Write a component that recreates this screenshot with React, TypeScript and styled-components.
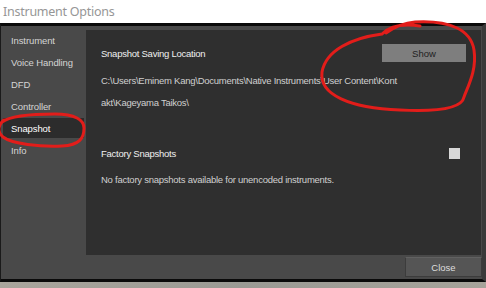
import styled, { createGlobalStyle } from "styled-components";

const GlobalStyle = createGlobalStyle`
  html, body {
    margin: 0;
    padding: 0;
    background: #ffffff;
  }
  * {
    box-sizing: border-box;
  }
`;

const Screen = styled.div`
  position: relative;
  width: 486px;
  height: 288px;
  overflow: hidden;
  display: flex;
  flex-direction: column;
  background: #ffffff;
  font-family: "Liberation Sans", Arial, sans-serif;
`;

const TitleBar = styled.div`
  height: 23px;
  flex-shrink: 0;
  display: flex;
  align-items: center;
  padding: 0 0 1px 3px;
  font-family: "Noto Sans", "Liberation Sans", sans-serif;
  font-size: 12.5px;
  letter-spacing: -0.25px;
  color: #969696;
`;

const Window = styled.div`
  height: 259px;
  flex-shrink: 0;
  display: flex;
  flex-direction: column;
  background: #494949;
  border-top: 3px solid #0a0a0a;
  border-bottom: 3px solid #0a0a0a;
  border-left: 1px solid #1a1a1a;
  border-right: 4px solid #3a3a3a;
`;

const Body = styled.div`
  flex: 1;
  display: flex;
  padding: 4px 1px 0 0;
`;

const Sidebar = styled.ul`
  width: 85px;
  margin: 0;
  padding: 0 0 0 2px;
  list-style: none;
  display: flex;
  flex-direction: column;
  gap: 2px;
`;

const NavItem = styled.li<{ $active?: boolean }>`
  height: 20px;
  display: flex;
  align-items: center;
  padding-left: 8px;
  margin-right: 2px;
  font-size: 9.5px;
  letter-spacing: -0.1px;
  color: ${(p) => (p.$active ? "#ffffff" : "#d4d4d4")};
  background: ${(p) => (p.$active ? "#2c2c2c" : "transparent")};
`;

const Panel = styled.section`
  flex: 1;
  background: #2f2f2f;
  padding: 14px 14px 0 15px;
  display: flex;
  flex-direction: column;
  color: #d6d6d6;
  font-size: 9.5px;
  letter-spacing: -0.25px;
`;

const Row = styled.div`
  display: flex;
  align-items: center;
  justify-content: space-between;
`;

const Heading = styled.div`
  color: #f0f0f0;
`;

const ShowButton = styled.button`
  width: 84px;
  height: 18px;
  margin-right: 1px;
  border: none;
  background: #7e7e7e;
  color: #1e1e1e;
  font-family: inherit;
  font-size: 9.5px;
  padding: 0;
`;

const Paths = styled.div`
  margin-top: 8px;
`;

const PathLine = styled.div`
  height: 22px;
  line-height: 22px;
  color: #cfcfcf;
`;

const Section = styled.div`
  margin-top: 34px;
`;

const CheckBox = styled.span`
  width: 11px;
  height: 11px;
  margin-right: 7px;
  background: #d8d8d8;
`;

const Note = styled.div`
  margin-top: 15px;
  color: #cfcfcf;
`;

const Footer = styled.div`
  height: 24px;
  flex-shrink: 0;
  display: flex;
  justify-content: flex-end;
  align-items: center;
`;

const CloseButton = styled.button`
  width: 77px;
  height: 20px;
  background: #555555;
  border: 1px solid #3c3c3c;
  border-top-color: #616161;
  color: #dedede;
  font-family: inherit;
  font-size: 9.5px;
  padding: 0;
`;

const Desk = styled.div`
  flex: 1;
  background: linear-gradient(90deg, #a9a59c 0%, #9a9a94 50%, #a6a39a 100%);
`;

const Marks = styled.svg`
  position: absolute;
  left: 0;
  top: 0;
  pointer-events: none;
`;

const navItems = ["Instrument", "Voice Handling", "DFD", "Controller", "Snapshot", "Info"];

const App = () => {
  return (
    <>
      <GlobalStyle />
      <Screen>
        <TitleBar>Instrument Options</TitleBar>
        <Window>
          <Body>
            <Sidebar>
              {navItems.map((item) => (
                <NavItem key={item} $active={item === "Snapshot"}>
                  {item}
                </NavItem>
              ))}
            </Sidebar>
            <Panel>
              <Row>
                <Heading>Snapshot Saving Location</Heading>
                <ShowButton>Show</ShowButton>
              </Row>
              <Paths>
                <PathLine>C:\Users\Eminem Kang\Documents\Native Instruments\User Content\Kont</PathLine>
                <PathLine>akt\Kageyama Taikos\</PathLine>
              </Paths>
              <Section>
                <Row>
                  <Heading>Factory Snapshots</Heading>
                  <CheckBox />
                </Row>
                <Note>No factory snapshots available for unencoded instruments.</Note>
              </Section>
            </Panel>
          </Body>
          <Footer>
            <CloseButton>Close</CloseButton>
          </Footer>
        </Window>
        <Desk />
        <Marks width="486" height="288" viewBox="0 0 486 288">
          <g fill="none" stroke="#e21d1a" strokeWidth="3" strokeLinecap="round">
            <path d="M 2 122 C 10 116, 30 114, 55 114 C 75 114, 84 120, 84 128 C 84 138, 80 145, 62 146 C 40 147, 12 144, 3 137 C -3 132, -2 125, 4 120" />
            <path d="M 420 26 C 400 23, 388 28, 382 34 C 352 38, 326 50, 322 72 C 319 95, 350 108, 400 110 C 440 112, 462 108, 464 97 C 468 86, 477 70, 474 50 C 471 30, 450 20, 415 22 C 402 23, 393 28, 386 33" />
          </g>
        </Marks>
      </Screen>
    </>
  );
};

export default App;
